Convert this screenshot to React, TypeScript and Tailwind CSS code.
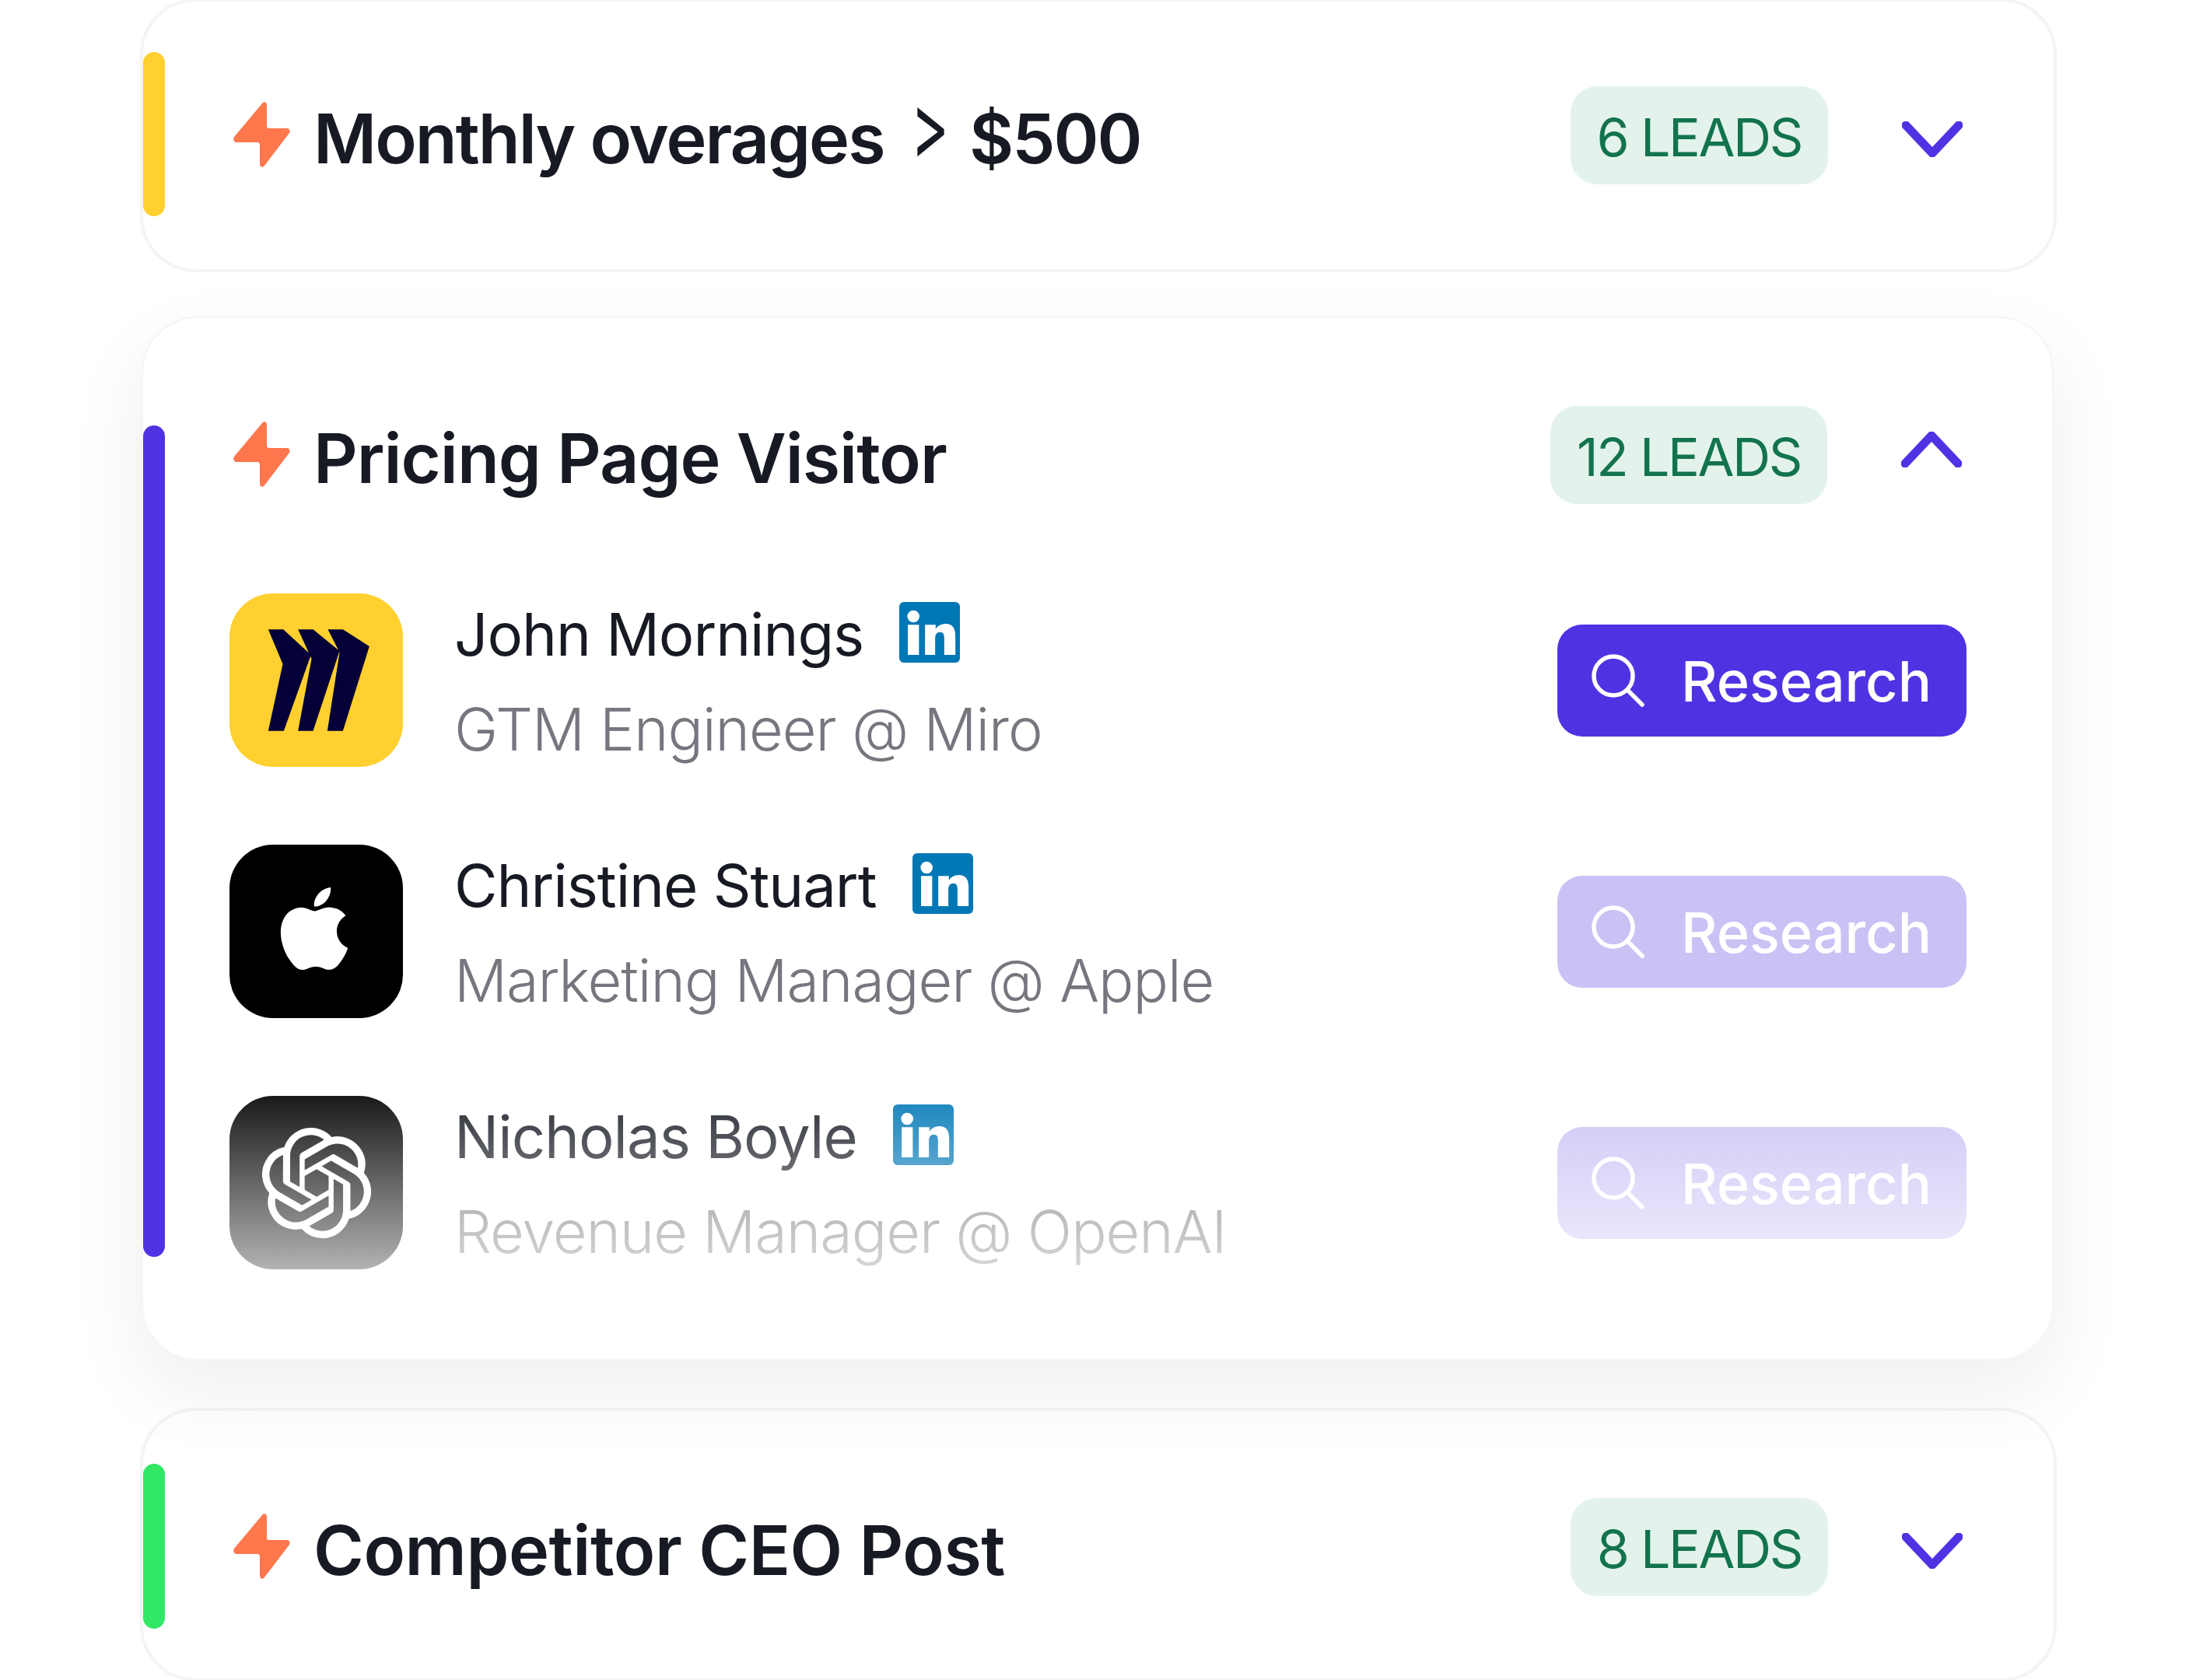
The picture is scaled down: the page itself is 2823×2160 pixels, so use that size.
import { SiApple, SiOpenai } from "react-icons/si";

interface IChevronProps {
  up?: boolean;
}

function Chevron(props: Readonly<IChevronProps>) {
  const { up } = props;

  return (
    <svg width="78" height="46" viewBox="0 0 78 46" fill="none" className="shrink-0">
      <path
        d={up ? "M5 41 39 5l34 36" : "M5 5l34 36L73 5"}
        stroke="#4F33E3"
        strokeWidth="11"
        strokeLinecap="round"
        strokeLinejoin="round"
      />
    </svg>
  );
}

function Bolt() {
  return (
    <svg width="73" height="84" viewBox="0 0 73 84" className="shrink-0 -translate-y-[5px]">
      <path
        d="M37 2c2-3 6-2 6 2v27c0 2 1 3 3 3h23c3 0 4 3 3 6L40 82c-2 3-6 2-6-2V56c0-2-1-4-3-4H4c-3 0-5-3-3-7z"
        fill="#FF774D"
      />
    </svg>
  );
}

function LinkedIn() {
  return (
    <svg width="78" height="78" viewBox="0 0 24 24" className="shrink-0 -mt-[3px]">
      <rect width="24" height="24" rx="1.8" fill="#0077B5" />
      <circle cx="5.6" cy="5.7" r="2.4" fill="#fff" />
      <path
        d="M3.4 9h4.4v11.9H3.4zM10.2 9h4.2v1.7c.7-1.2 2.1-2.1 3.9-2.1 3 0 3.9 2 3.9 5v7.3h-4.4v-6.4c0-1.6-.3-2.6-1.7-2.6-1.5 0-1.9 1.1-1.9 2.7v6.3h-4z"
        fill="#fff"
      />
    </svg>
  );
}

function SearchIcon() {
  return (
    <svg width="68" height="68" viewBox="0 0 68 68" fill="none" className="shrink-0">
      <circle cx="28" cy="28" r="25" stroke="#fff" strokeWidth="5.5" />
      <path d="M47 47l18 18" stroke="#fff" strokeWidth="5.5" strokeLinecap="round" />
    </svg>
  );
}

function MiroLogo() {
  return (
    <div className="w-[223px] h-[223px] shrink-0 rounded-[56px] bg-[#FFD02F]">
      <svg width="223" height="223" viewBox="77 68 666 669">
        <path
          d="M225 207h58l107 98-105 293h-60l56-258zM340 207h58l102 83-102 308h-58l52-278zM455 207h58l102 65-102 326h-60l47-303z"
          fill="#050038"
        />
      </svg>
    </div>
  );
}

function AppleLogo() {
  return (
    <div className="w-[223px] h-[223px] shrink-0 rounded-[56px] bg-black flex items-center justify-center">
      <SiApple size={106} color="#fff" className="-mt-[8px] -ml-[6px]" />
    </div>
  );
}

function OpenAiLogo() {
  return (
    <div className="w-[223px] h-[223px] shrink-0 rounded-[56px] bg-black flex items-center justify-center">
      <SiOpenai size={142} color="#fff" />
    </div>
  );
}

interface IHeaderProps {
  title: React.ReactNode;
  tracking: string;
  leads: string;
  up?: boolean;
}

function Header(props: Readonly<IHeaderProps>) {
  const { title, tracking, leads, up } = props;

  return (
    <div className="flex-1 flex items-center">
      <div className="flex items-center gap-x-[30px] ml-[4px] mt-[8px]">
        <Bolt />
        <span className={`text-[88px] leading-[100px] font-semibold text-[#171A23] whitespace-nowrap ${tracking}`}>
          {title}
        </span>
      </div>
      <div className="ml-auto h-[126px] px-[34px] pt-[3px] rounded-[34px] bg-[#E3F3EC] flex items-center text-[68px] text-[#13734F] tracking-[-2.4px] whitespace-nowrap">
        {leads}
      </div>
      <div className={up ? "ml-[95px] mr-[6px] -mt-[14px]" : "ml-[95px] mr-[6px] mt-[10px]"}>
        <Chevron up={up} />
      </div>
    </div>
  );
}

interface ILeadProps {
  name: string;
  role: string;
  logo: React.ReactNode;
  button: string;
  fade?: boolean;
}

function Lead(props: Readonly<ILeadProps>) {
  const { name, role, logo, button, fade } = props;

  return (
    <div className="relative flex items-center h-[223px] -ml-[1px]">
      {logo}
      <div className="ml-[66px] pt-[3px]">
        <div className="flex items-center gap-x-[46px] h-[100px]">
          <span className="text-[76px] leading-[100px] text-[#171A23] tracking-[-1px] whitespace-nowrap">{name}</span>
          <LinkedIn />
        </div>
        <div className="mt-[23px] text-[75.5px] leading-[100px] font-light text-[#76767E] tracking-[-1px] whitespace-nowrap">
          {role}
        </div>
      </div>
      <button className={`ml-auto w-[526px] h-[144px] rounded-[32px] flex items-center pl-[44px] gap-x-[47px] text-[72px] font-medium text-white ${button}`}>
        <SearchIcon />
        <span className="mt-[2px]">Research</span>
      </button>
      {fade && (
        <div className="absolute inset-0 pointer-events-none bg-gradient-to-b from-white/10 to-white/70" />
      )}
    </div>
  );
}

export default function App() {
  return (
    <div className="h-[2160px] overflow-hidden bg-white font-['Inter',sans-serif]">
      <div className="w-[2464px] ml-[180px] -mt-[2px] flex flex-col">
        <div className="h-[352px] rounded-[72px] border-4 border-[#F4F4F6] bg-white flex items-center pr-[111px]">
          <div className="w-[28px] h-[211px] -mt-[4px] rounded-full bg-[#FFD02F] mr-[84px] shrink-0" />
          <Header
            leads="6 LEADS"
            tracking="tracking-[-2px]"
            title={
              <>
                Monthly overages
                <span className="inline-block align-baseline ml-[19px] mr-[13px] text-[120px] leading-[0] font-normal scale-x-[0.62] -translate-y-[6px]">&gt;</span>
                $500
              </>
            }
          />
        </div>

        <div className="relative z-10 w-[2458px] ml-[2px] mt-[57px] h-[1342px] rounded-[72px] border-2 border-[#F5F5F6] bg-white flex items-start shadow-[0_40px_100px_rgba(30,35,60,0.07)]">
          <div className="w-[28px] h-[1069px] rounded-full bg-[#4F33E3] mt-[138px] mr-[84px] shrink-0" />
          <div className="flex-1 pr-[110px] pt-[113px] flex flex-col">
            <div className="h-[126px] flex">
              <Header leads="12 LEADS" tracking="tracking-[-1px]" title="Pricing Page Visitor" up />
            </div>
            <div className="mt-[115px] flex flex-col gap-y-[100px]">
              <Lead name="John Mornings" role="GTM Engineer @ Miro" logo={<MiroLogo />} button="bg-[#4F33E3]" />
              <Lead name="Christine Stuart" role="Marketing Manager @ Apple" logo={<AppleLogo />} button="bg-[#CAC2F5]" />
              <Lead name="Nicholas Boyle" role="Revenue Manager @ OpenAI" logo={<OpenAiLogo />} button="bg-[#CAC2F5]" fade />
            </div>
          </div>
        </div>

        <div className="mt-[61px] h-[352px] pt-[6px] rounded-[72px] border-4 border-[#F4F4F6] bg-white flex items-center pr-[111px]">
          <div className="w-[28px] h-[212px] -mt-[2px] rounded-full bg-[#31E765] mr-[84px] shrink-0" />
          <Header leads="8 LEADS" tracking="tracking-[-0.4px]" title="Competitor CEO Post" />
        </div>
      </div>
    </div>
  );
}
